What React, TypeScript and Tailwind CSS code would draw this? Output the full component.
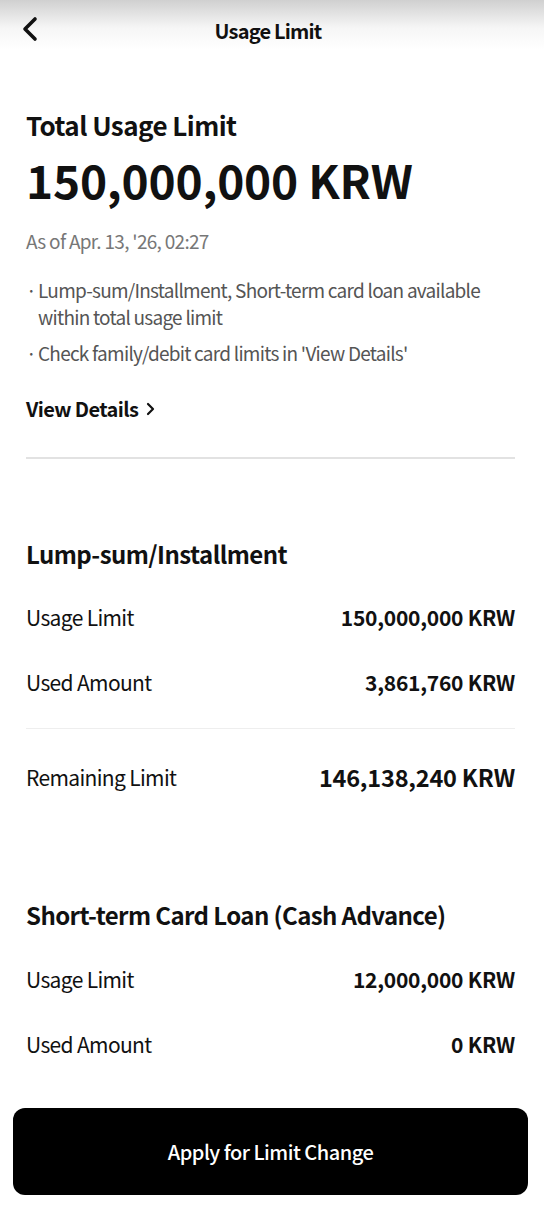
import React from 'react'

const font = { fontFamily: '"Noto Sans CJK KR", "Noto Sans", sans-serif' }

function Row({ label, value, big }: { label: string; value: string; big?: boolean }) {
  return (
    <div className="flex justify-between items-center h-[30px]">
      <span className="text-[21px] text-[#111] tracking-[-0.65px]">{label}</span>
      <span
        className={
          big
            ? 'text-[23.5px] font-bold text-[#111] tracking-[-0.2px]'
            : 'text-[21px] font-bold text-[#111] tracking-[-0.25px]'
        }
      >
        {value}
      </span>
    </div>
  )
}

export default function App() {
  return (
    <main className="min-h-screen bg-white" style={font}>
      {/* header */}
      <header className="relative h-[64px] flex items-center justify-center bg-[linear-gradient(to_bottom,#d0d0d0,#f6f6f6_28px,#ffffff_50px)]">
        <button className="absolute left-[20px] top-[16px] p-0">
          <svg width="22" height="26" viewBox="0 0 22 26" fill="none">
            <path d="M15 3 L5 13 L15 23" stroke="#111" strokeWidth="3.6" strokeLinecap="round" strokeLinejoin="round" />
          </svg>
        </button>
        <h1 className="-ml-[8px] -mt-[2px] text-[20px] font-bold text-[#111] leading-none tracking-[-0.8px]">Usage Limit</h1>
      </header>

      <div className="pl-[26px] pr-[29px]">
        <h2 className="mt-[43px] text-[26px] leading-[36px] font-bold text-[#111] tracking-[-0.55px]">Total Usage Limit</h2>
        <p className="mt-[6px] text-[46px] leading-[60px] font-bold text-[#111] tracking-[-0.2px]">150,000,000 KRW</p>
        <p className="mt-[18px] text-[19px] leading-[28px] text-[#777] tracking-[-0.7px]">As of Apr. 13, '26, 02:27</p>

        <ul className="mt-[21px] flex flex-col gap-[9px] text-[19px] leading-[27px] text-[#555] tracking-[-0.75px]">
          <li className="flex">
            <span className="w-[12px] shrink-0">·</span>
            <span>Lump-sum/Installment, Short-term card loan available within total usage limit</span>
          </li>
          <li className="flex">
            <span className="w-[12px] shrink-0">·</span>
            <span>Check family/debit card limits in 'View Details'</span>
          </li>
        </ul>

        <button className="mt-[29px] flex items-center gap-[8px] h-[28px] text-[20px] font-bold text-[#111] tracking-[-0.6px]">
          View Details
          <svg width="9" height="14" viewBox="0 0 9 14" fill="none">
            <path d="M2 2 L7 7 L2 12" stroke="#111" strokeWidth="2.2" strokeLinecap="round" strokeLinejoin="round" />
          </svg>
        </button>

        <div className="mt-[34px] border-t-2 border-[#e2e2e2]" />

        <section>
          <h3 className="mt-[78px] text-[24px] leading-[34px] font-bold text-[#111] tracking-[-0.55px]">Lump-sum/Installment</h3>
          <div className="mt-[32px] flex flex-col gap-[35px]">
            <Row label="Usage Limit" value="150,000,000 KRW" />
            <Row label="Used Amount" value="3,861,760 KRW" />
          </div>
          <div className="mt-[30px] border-t border-[#eeeeee]" />
          <div className="mt-[34px]">
            <Row label="Remaining Limit" value="146,138,240 KRW" big />
          </div>
        </section>

        <section>
          <h3 className="mt-[105px] text-[24px] leading-[34px] font-bold text-[#111] tracking-[-0.6px]">
            Short-term Card Loan (Cash Advance)
          </h3>
          <div className="mt-[33px] flex flex-col gap-[35px]">
            <Row label="Usage Limit" value="12,000,000 KRW" />
            <Row label="Used Amount" value="0 KRW" />
          </div>
        </section>
      </div>

      <div className="pl-[13px] pr-[16px] mt-[48px] pb-[20px]">
        <button className="w-full h-[87px] rounded-[12px] bg-black text-white text-[20px] font-medium tracking-[-0.5px]">
          Apply for Limit Change
        </button>
      </div>
    </main>
  )
}
